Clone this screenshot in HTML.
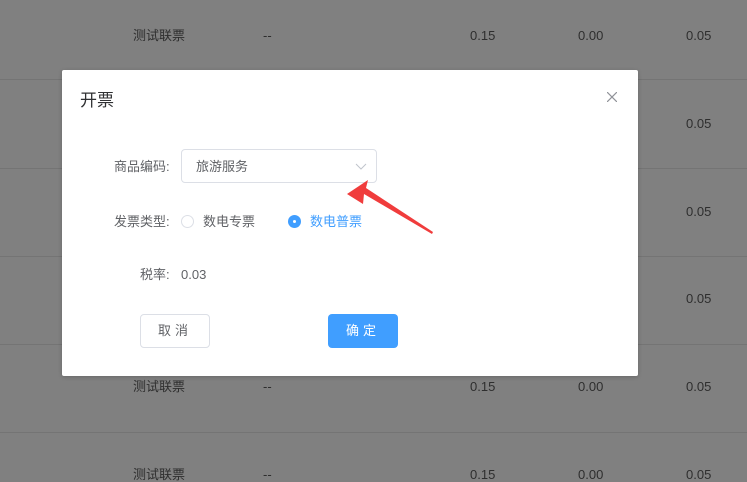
<!DOCTYPE html>
<html><head><meta charset="utf-8"><style>
html,body{margin:0;width:747px;height:482px;overflow:hidden}
body{background:#808080;font-family:"Liberation Sans","Noto Sans CJK SC",sans-serif;position:relative}
.row{position:absolute;left:0;width:747px;height:88px;border-bottom:1px solid #747474;color:#2e2e2e;font-size:13px}
.row span{position:absolute;top:0;line-height:74px}
.dlg{position:absolute;left:62px;top:70px;width:576px;height:306px;background:#fff;border-radius:2px;box-shadow:0 1px 4px rgba(0,0,0,.2)}
.t{position:absolute;font-size:13px;color:#606266;white-space:nowrap;line-height:16px}
</style></head><body>
<div class="row" style="top:-1px;height:80px"><span style="left:133px">测试联票</span><span style="left:263px">--</span><span style="left:470px">0.15</span><span style="left:578px">0.00</span><span style="left:686px">0.05</span></div>
<div class="row" style="top:80px"><span style="left:686px;top:7px">0.05</span></div>
<div class="row" style="top:168px"><span style="left:686px;top:7px">0.05</span></div>
<div class="row" style="top:256px"><span style="left:686px;top:6px">0.05</span></div>
<div class="row" style="top:344px"><span style="left:133px;top:6px">测试联票</span><span style="left:263px;top:6px">--</span><span style="left:470px;top:6px">0.15</span><span style="left:578px;top:6px">0.00</span><span style="left:686px;top:6px">0.05</span></div>
<div class="row" style="top:432px;height:49px;border:0"><span style="left:133px;top:6px">测试联票</span><span style="left:263px;top:6px">--</span><span style="left:470px;top:6px">0.15</span><span style="left:578px;top:6px">0.00</span><span style="left:686px;top:6px">0.05</span></div>
<div class="dlg">
<div class="t" style="left:18px;top:21px;font-size:17px;line-height:20px;color:#303133">开票</div>
<svg style="position:absolute;left:545px;top:22px" width="10" height="10"><path d="M0 0L10 10M10 0L0 10" stroke="#909399" stroke-width="1.2"/></svg>
<div class="t" style="left:52px;top:89px">商品编码:</div>
<div style="position:absolute;left:119px;top:79px;width:194px;height:32px;border:1px solid #dcdfe6;border-radius:4px"></div>
<div class="t" style="left:134px;top:89px">旅游服务</div>
<svg style="position:absolute;left:293px;top:93px" width="12" height="7"><path d="M1 1L6 6L11 1" stroke="#c0c4cc" fill="none"/></svg>
<div class="t" style="left:52px;top:144px">发票类型:</div>
<div style="position:absolute;left:119px;top:145px;width:11px;height:11px;border:1px solid #dcdfe6;border-radius:50%"></div>
<div class="t" style="left:141px;top:144px">数电专票</div>
<div style="position:absolute;left:226px;top:145px;width:13px;height:13px;background:#409eff;border-radius:50%"></div>
<div style="position:absolute;left:231px;top:150px;width:3px;height:3px;background:#fff;border-radius:50%"></div>
<div class="t" style="left:248px;top:144px;color:#409eff">数电普票</div>
<div class="t" style="left:78px;top:197px">税率:</div>
<div class="t" style="left:119px;top:197px">0.03</div>
<div style="position:absolute;left:78px;top:244px;width:68px;height:32px;border:1px solid #dcdfe6;border-radius:4px;font-size:13px;color:#606266;text-align:center;line-height:32px;letter-spacing:4px">取消</div>
<div style="position:absolute;left:266px;top:244px;width:70px;height:34px;background:#409eff;border-radius:4px;font-size:13px;color:#fff;text-align:center;line-height:34px;letter-spacing:4px">确定</div>
<svg style="position:absolute;left:0;top:0" width="576" height="306"><path d="M285 124L306 110L304 118L371 162L370 164L302 124L301 134Z" fill="#f03c3c"/></svg>
</div>
</body></html>
